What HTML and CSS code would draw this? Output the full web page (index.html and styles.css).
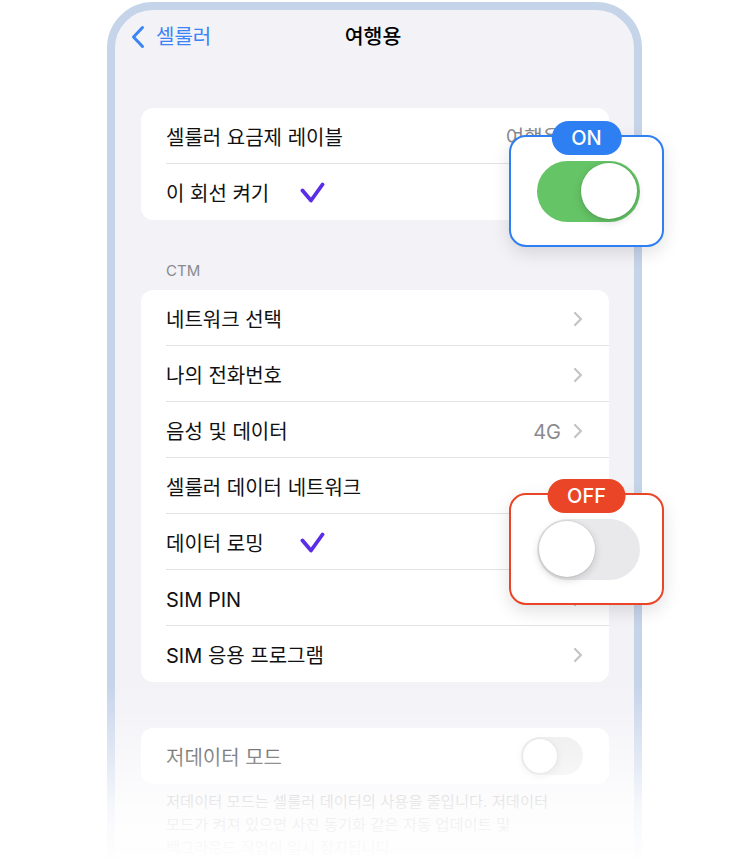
FILE: index.html
```html
<!DOCTYPE html>
<html lang="ko">
<head>
<meta charset="utf-8">
<title>여행용</title>
<link rel="stylesheet" href="styles.css">
</head>
<body>
<div class="stage">
  <div class="phone">
    <div class="nav">
      <div class="back">
        <svg class="back-chev" width="14" height="24" viewBox="0 0 14 24"><path d="M11.5 2.5 L2.5 12 L11.5 21.5"/></svg>
        <span>셀룰러</span>
      </div>
      <div class="title">여행용</div>
      <div></div>
    </div>

    <div class="card first">
      <div class="row">
        <span class="label">셀룰러 요금제 레이블</span>
        <span class="value">여행용</span>
        <svg class="chev" width="10" height="16" viewBox="0 0 10 16"><path d="M2 2 L8 8 L2 14"/></svg>
      </div>
      <div class="row">
        <span class="label check-label">이 회선 켜기</span>
        <svg class="check" width="25" height="21" viewBox="0 0 25 21"><path d="M2.5 8.5 L11 18.5 L22.5 2.5"/></svg>
        <span class="toggle on push"></span>
      </div>
    </div>

    <div class="section-label">CTM</div>

    <div class="card">
      <div class="row">
        <span class="label">네트워크 선택</span>
        <svg class="chev push" width="10" height="16" viewBox="0 0 10 16"><path d="M2 2 L8 8 L2 14"/></svg>
      </div>
      <div class="row">
        <span class="label">나의 전화번호</span>
        <svg class="chev push" width="10" height="16" viewBox="0 0 10 16"><path d="M2 2 L8 8 L2 14"/></svg>
      </div>
      <div class="row">
        <span class="label">음성 및 데이터</span>
        <span class="value">4G</span>
        <svg class="chev" width="10" height="16" viewBox="0 0 10 16"><path d="M2 2 L8 8 L2 14"/></svg>
      </div>
      <div class="row">
        <span class="label">셀룰러 데이터 네트워크</span>
        <svg class="chev push" width="10" height="16" viewBox="0 0 10 16"><path d="M2 2 L8 8 L2 14"/></svg>
      </div>
      <div class="row">
        <span class="label check-label">데이터 로밍</span>
        <svg class="check" width="25" height="21" viewBox="0 0 25 21"><path d="M2.5 8.5 L11 18.5 L22.5 2.5"/></svg>
        <span class="toggle push"></span>
      </div>
      <div class="row">
        <span class="label">SIM PIN</span>
        <svg class="chev push" width="10" height="16" viewBox="0 0 10 16"><path d="M2 2 L8 8 L2 14"/></svg>
      </div>
      <div class="row">
        <span class="label">SIM 응용 프로그램</span>
        <svg class="chev push" width="10" height="16" viewBox="0 0 10 16"><path d="M2 2 L8 8 L2 14"/></svg>
      </div>
    </div>

    <div class="card third">
      <div class="row">
        <span class="label">저데이터 모드</span>
        <span class="toggle push"></span>
      </div>
    </div>

    <p class="footnote">저데이터 모드는 셀룰러 데이터의 사용을 줄입니다. 저데이터<br>모드가 켜져 있으면 사진 동기화 같은 자동 업데이트 및<br>백그라운드 작업이 일시 정지됩니다.</p>
  </div>

  <div class="fade"></div>

  <div class="callout callout-on">
    <span class="badge">ON</span>
    <span class="toggle big on"></span>
  </div>

  <div class="callout callout-off">
    <span class="badge">OFF</span>
    <span class="toggle big"></span>
  </div>
</div>
</body>
</html>
```

FILE: styles.css
```css
* {
  box-sizing: border-box;
  margin: 0;
  padding: 0;
}

html,
body {
  background: #ffffff;
}

body {
  width: 750px;
  height: 860px;
  overflow: hidden;
  font-family: "Inter", "Noto Sans CJK KR", sans-serif;
  color: #000000;
}

.stage {
  position: relative;
  width: 750px;
  height: 860px;
  overflow: hidden;
  padding: 2px 0 0 107px;
}

.phone {
  width: 535px;
  height: 940px;
  border: 8px solid #c6d4ea;
  border-radius: 46px;
  background: #f2f2f7;
}

/* navigation bar */
.nav {
  display: grid;
  grid-template-columns: 1fr auto 1fr;
  align-items: center;
  height: 54px;
  padding: 0 19px 0 16px;
}

.back {
  display: flex;
  align-items: center;
  gap: 11px;
  color: #3a84f5;
  font-size: 20px;
  line-height: 1;
}

.back-chev path {
  fill: none;
  stroke: #3a84f5;
  stroke-width: 3;
  stroke-linecap: round;
  stroke-linejoin: round;
}

.title {
  font-size: 20.5px;
  font-weight: 500;
  line-height: 1;
  color: #000000;
}

/* grouped cards */
.card {
  margin: 0 25px 0 26px;
  background: #ffffff;
  border-radius: 12px;
}

.card.first {
  margin-top: 44px;
}

.card.third {
  margin-top: 46px;
}

.row {
  position: relative;
  display: flex;
  align-items: center;
  height: 56px;
  padding: 3px 26px 0 25px;
  font-size: 20px;
  line-height: 1;
}

.row:not(:last-child)::after {
  content: "";
  position: absolute;
  left: 25px;
  right: 0;
  bottom: 0;
  height: 1px;
  background: #e3e3e7;
}

.label {
  color: #111111;
  white-space: nowrap;
}

.check-label {
  min-width: 134px;
}

.check {
  flex: none;
  margin-top: -2px;
}

.check path {
  fill: none;
  stroke: #5b2de6;
  stroke-width: 3.8;
  stroke-linecap: round;
  stroke-linejoin: round;
}

.value {
  margin-left: auto;
  margin-right: 12px;
  color: #8a8a8e;
  white-space: nowrap;
}

.chev {
  flex: none;
  margin-top: -2px;
}

.chev path {
  fill: none;
  stroke: #c4c4c7;
  stroke-width: 2.2;
  stroke-linecap: round;
  stroke-linejoin: round;
}

.push {
  margin-left: auto;
}

.toggle.push {
  margin-top: -3px;
}

.section-label {
  margin: 42px 0 10px 51px;
  font-size: 15px;
  line-height: 18px;
  color: #8a8a8e;
}

.footnote {
  margin: 6px 0 0 51px;
  font-size: 15.3px;
  line-height: 23px;
  color: #8a8a8e;
  white-space: nowrap;
}

/* toggles */
.toggle {
  position: relative;
  flex: none;
  width: 62px;
  height: 38px;
  border-radius: 19px;
  background: #e9e9eb;
}

.toggle::after {
  content: "";
  position: absolute;
  top: 2px;
  left: 2px;
  width: 34px;
  height: 34px;
  border-radius: 50%;
  background: #ffffff;
  box-shadow: 0 3px 8px rgba(0, 0, 0, 0.15), 0 0 0 1px rgba(0, 0, 0, 0.04);
}

.toggle.on {
  background: #65c466;
}

.toggle.on::after {
  left: auto;
  right: 2px;
}

.toggle.big {
  width: 103px;
  height: 61px;
  border-radius: 31px;
}

.toggle.big::after {
  top: 2.5px;
  left: 2px;
  width: 56px;
  height: 56px;
  box-shadow: 0 3px 9px rgba(0, 0, 0, 0.16), 0 0 0 1px rgba(0, 0, 0, 0.05);
}

.toggle.big.on::after {
  left: auto;
  right: 2.5px;
}

/* fade at the bottom */
.fade {
  position: absolute;
  left: 0;
  right: 0;
  bottom: 0;
  height: 175px;
  background: linear-gradient(
    to bottom,
    rgba(255, 255, 255, 0) 0%,
    rgba(255, 255, 255, 0.45) 38%,
    rgba(255, 255, 255, 0.84) 70%,
    rgba(255, 255, 255, 0.98) 100%
  );
}

/* magnified callouts */
.callout {
  position: absolute;
  display: flex;
  align-items: center;
  justify-content: center;
  width: 155px;
  height: 112px;
  padding-left: 3px;
  border: 2px solid #2d7ff2;
  border-radius: 17px;
  background: #ffffff;
  box-shadow: 0 6px 18px rgba(0, 0, 0, 0.12);
}

.callout-on {
  left: 509px;
  top: 135px;
}

.callout-off {
  left: 509px;
  top: 493px;
  border-color: #ea4526;
}

.badge {
  position: absolute;
  top: -16px;
  left: 50%;
  transform: translateX(-50%);
  height: 34px;
  padding: 0 20px;
  border-radius: 17px;
  background: #2d7ff2;
  color: #ffffff;
  font-family: "Inter", sans-serif;
  font-size: 20px;
  font-weight: 500;
  line-height: 34px;
  white-space: nowrap;
}

.callout-off .badge {
  background: #ea4526;
}
```
